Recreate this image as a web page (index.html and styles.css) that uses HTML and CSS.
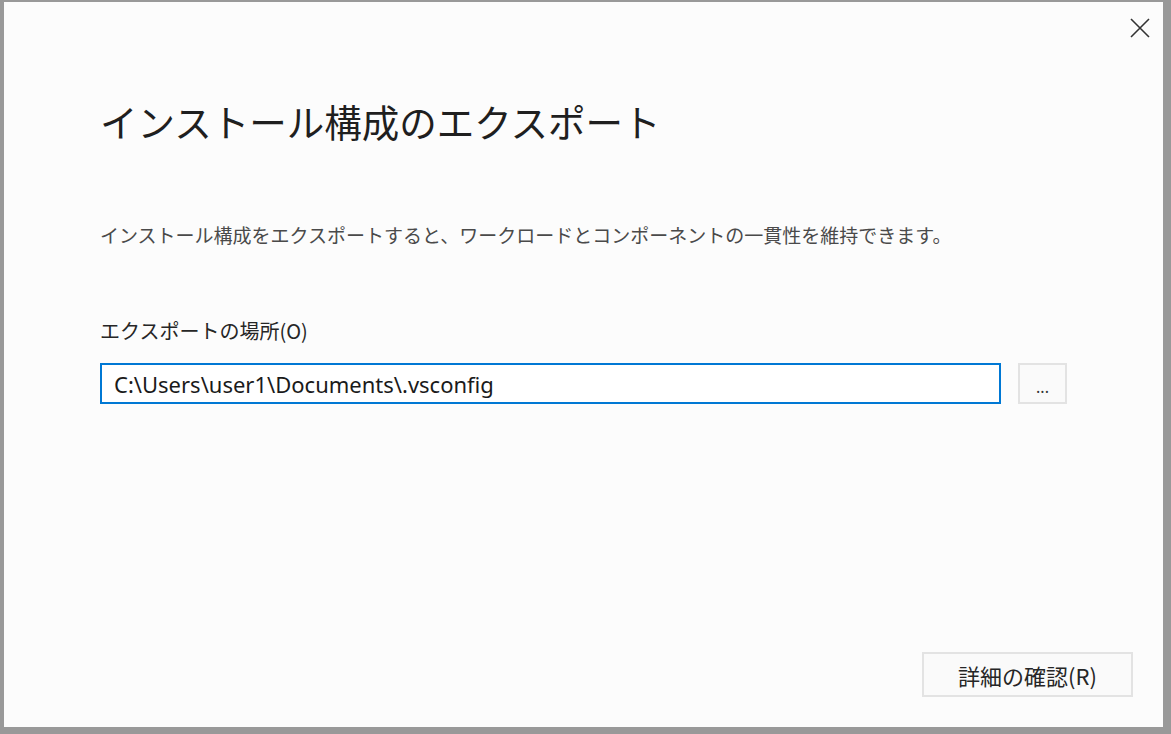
FILE: index.html
```html
<!DOCTYPE html>
<html lang="ja">
<head>
<meta charset="utf-8">
<title>インストール構成のエクスポート</title>
<link rel="stylesheet" href="styles.css">
</head>
<body>
<div class="window">
  <div class="titlebar">
    <button class="close" aria-label="閉じる">
      <svg width="20" height="20" viewBox="0 0 20 20"><path d="M1 1L19 19M19 1L1 19" stroke="#333" stroke-width="1.6" fill="none"/></svg>
    </button>
  </div>
  <div class="content">
    <h1 class="title">インストール構成のエクスポート</h1>
    <p class="desc">インストール構成をエクスポートすると、ワークロードとコンポーネントの一貫性を維持できます。</p>
    <label class="label" for="loc">エクスポートの場所(O)</label>
    <div class="row">
      <input id="loc" class="path" type="text" value="C:\Users\user1\Documents\.vsconfig">
      <button class="browse">...</button>
    </div>
  </div>
  <div class="footer">
    <button class="review">詳細の確認(R)</button>
  </div>
</div>
</body>
</html>
```
FILE: styles.css
```css
html, body {
  margin: 0;
  padding: 0;
  background: #999999;
}
body {
  font-family: "Noto Sans CJK JP", "Noto Sans", sans-serif;
  padding: 2px 8px 7px 4px;
}
.window {
  height: 725px;
  background: #fcfcfc;
  display: flex;
  flex-direction: column;
}
.titlebar {
  height: 50px;
  display: flex;
  justify-content: flex-end;
  align-items: flex-start;
  padding: 14px 11px 0 0;
  box-sizing: border-box;
}
.close {
  width: 24px;
  height: 24px;
  padding: 0;
  margin: 0;
  border: none;
  background: transparent;
  display: flex;
  align-items: center;
  justify-content: center;
}
.content {
  padding-left: 96px;
  display: flex;
  flex-direction: column;
}
.title {
  margin: 43px 0 0 0;
  font-size: 37.5px;
  font-weight: 400;
  line-height: 52px;
  color: #1f1f1f;
}
.desc {
  margin: 74px 0 0 0;
  font-size: 19px;
  line-height: 28px;
  color: #4a4a4a;
}
.label {
  margin-top: 68px;
  font-size: 20px;
  line-height: 28px;
  color: #262626;
}
.row {
  margin-top: 18px;
  display: flex;
  gap: 17px;
}
.path {
  width: 901px;
  height: 41px;
  box-sizing: border-box;
  border: 2px solid #0078d4;
  background: #ffffff;
  padding: 0 0 0 12px;
  margin: 0;
  font-family: "Noto Sans", "Open Sans", sans-serif;
  font-size: 22px;
  color: #1a1a1a;
  outline: none;
}
.browse {
  width: 49px;
  height: 41px;
  box-sizing: border-box;
  border: 2px solid #e3e3e3;
  background: #fafafa;
  margin: 0;
  padding: 6px 0 0 0;
  font-family: "Noto Sans", sans-serif;
  font-size: 16px;
  color: #333;
}
.footer {
  margin-top: auto;
  display: flex;
  justify-content: flex-end;
  padding: 0 30px 30px 0;
}
.review {
  width: 211px;
  height: 45px;
  box-sizing: border-box;
  border: 2px solid #e3e3e3;
  background: #fafafa;
  margin: 0;
  padding: 0;
  font-family: "Noto Sans CJK JP", "Noto Sans", sans-serif;
  font-size: 22px;
  color: #262626;
}
```
